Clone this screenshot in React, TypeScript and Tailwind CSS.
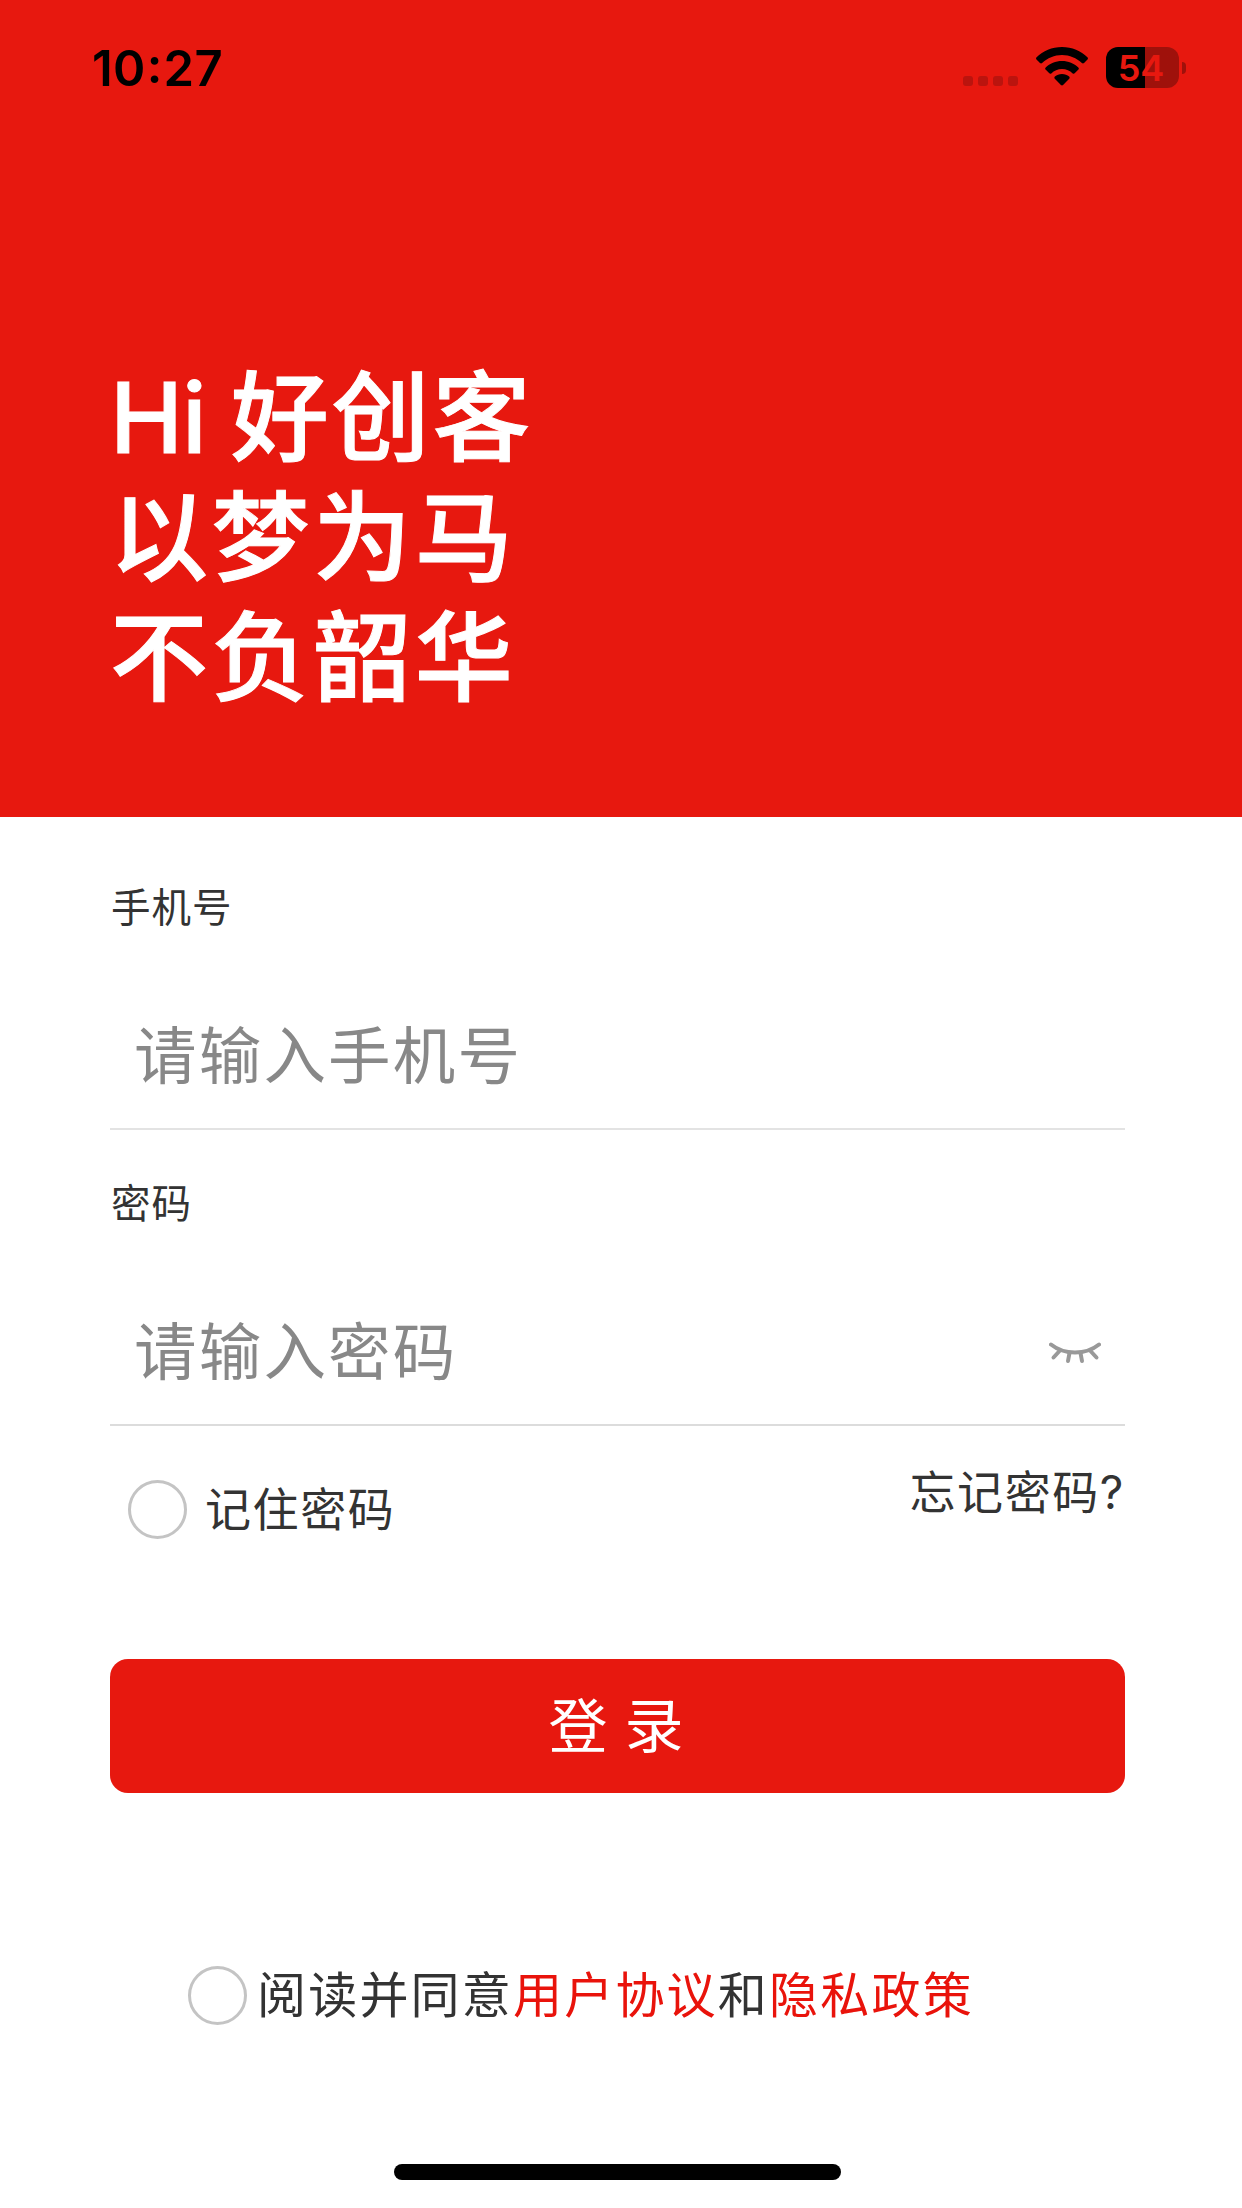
import { useState } from "react";
import { clsx } from "clsx";

const StatusBar = () => {
  return (
    <div className="flex h-[136px] items-start justify-between pl-[92px] pr-[56px] pt-[47px] text-black">
      <span className="font-['Inter',sans-serif] text-[49px] leading-[44px] font-semibold tracking-[0.3px]">
        10<span className="relative -top-[3px] mx-[1px]">:</span>27
      </span>
      <div className="-mt-px flex items-start">
        <div className="mt-[30px] mr-[17px] flex gap-[5px]">
          {[0, 1, 2, 3].map((dot) => (
            <span key={dot} className="size-[10px] rounded-[3px] bg-[#bb140e]" />
          ))}
        </div>
        <svg width="54" height="41" viewBox="0 0 54 41" className="mr-[17px]">
          <path d="M27 1C37 1 46 5 52.4 11.2c.7.7.7 1.6.1 2.2L49 17c-.6.6-1.5.6-2.1 0C41.600 12 34.600 9 27 9S12.400 12 7.100 17c-.6.600-1.500.600-2.100 0L1.500 13.400c-.6-.600-.6-1.500.1-2.200C8 5 17 1 27 1Z" />
          <path d="M27 15c6.400 0 12.200 2.500 16.300 6.400.7.700.7 1.600.1 2.200l-3.700 3.700c-.6.600-1.400.600-2 .1C34.900 24.700 31.200 23 27 23s-7.900 1.700-10.700 4.400c-.6.500-1.400.500-2-.1l-3.700-3.700c-.6-.600-.6-1.500.1-2.200C14.800 17.500 20.600 15 27 15Z" />
          <path d="M27 28c2.800 0 5.300 1 7.100 2.500.7.600.7 1.500.1 2.200l-6.100 6.400c-.6.600-1.600.600-2.200 0l-6.100-6.400c-.6-.7-.6-1.600.1-2.200C21.700 29 24.200 28 27 28Z" />
        </svg>
        <div className="mt-px flex items-center gap-[3px]">
          <div className="flex h-[41px] w-[73px] items-center justify-center rounded-[12px] bg-linear-to-r from-black from-[54%] to-[#9f110b] to-[54%] pr-[3px] font-['Inter',sans-serif] text-[36px] leading-[42px] font-semibold text-[#e7180f]">
            54
          </div>
          <span className="h-[12px] w-[4px] rounded-r-full bg-[#9f110b]" />
        </div>
      </div>
    </div>
  );
};

const ClosedEye = () => {
  return (
    <svg
      width="52"
      height="24"
      viewBox="0 0 52 24"
      fill="none"
      stroke="#999"
      strokeWidth="4"
      strokeLinecap="round"
    >
      <path d="M2 3.500Q12 11.500 26 11.500T50 3.500" />
      <path d="M10.500 10 4.500 16.500M20.500 12 19 20M31.500 12 33 20M41.500 10 47.500 16.500" />
    </svg>
  );
};

type RadioProps = { checked: boolean; onClick: () => void };

const Radio = ({ checked, onClick }: RadioProps) => (
  <button
    type="button"
    onClick={onClick}
    className={clsx(
      "size-[59px] shrink-0 rounded-full border-[3px]",
      checked ? "border-[#e7180f] bg-[#e7180f]" : "border-[#c4c4c4]"
    )}
  />
);

const inputClass =
  "h-[146px] min-w-0 flex-1 bg-transparent pt-[3px] text-[62.500px] tracking-[2.200px] text-[#333] placeholder:text-[#888] outline-none";

const App = () => {
  const [remember, setRemember] = useState(false);
  const [agree, setAgree] = useState(false);
  const [showPwd, setShowPwd] = useState(false);

  return (
    <div className="flex h-[2208px] w-[1242px] flex-col bg-white font-['Inter','Noto_Sans_CJK_SC',sans-serif] text-[#333]">
      <header className="h-[817px] bg-[#e7180f]">
        <StatusBar />
        <h1 className="pl-[110px] pt-[222px] text-[98px] leading-[120px] font-medium tracking-[3.600px] text-white [-webkit-text-stroke:1px_white]">
          <span className="tracking-[-1px]">Hi </span>
          <span className="tracking-[2.800px]">好创客</span>
          <br />
          以梦为马
          <br />
          不负韶华
        </h1>
      </header>

      <main className="flex flex-col pl-[110px] pr-[117px]">
        <label className="mt-[61px] h-[60px] pl-px text-[39.500px] leading-[61px] tracking-[1px]">
          手机号
        </label>
        <div className="mt-[42px] flex h-[150px] items-center border-b-2 border-[#e3e3e3] px-[24px]">
          <input className={inputClass} placeholder="请输入手机号" />
        </div>

        <label className="mt-[44px] h-[60px] pl-px text-[39.500px] leading-[61px] tracking-[1px]">
          密码
        </label>
        <div className="mt-[42px] flex h-[150px] items-center border-b-2 border-[#dcdcdc] px-[24px]">
          <input
            className={inputClass}
            type={showPwd ? "text" : "password"}
            placeholder="请输入密码"
          />
          <button
            type="button"
            className="pt-[5px]"
            onClick={() => setShowPwd(!showPwd)}
          >
            <ClosedEye />
          </button>
        </div>

        <div className="flex h-[233px] items-start justify-between pl-[18px] text-[46px] leading-[58px] tracking-[1.600px]">
          <div className="mt-[54px] flex items-start gap-[18px]">
            <Radio checked={remember} onClick={() => setRemember(!remember)} />
            <span>记住密码</span>
          </div>
          <a className="mt-[37px]">忘记密码?</a>
        </div>

        <button
          type="button"
          className="h-[134px] rounded-[18px] bg-[#e7180f] pt-[3px] pr-[3px] text-[59px] tracking-[0.200px] text-white"
        >
          登 录
        </button>

        <div className="mt-[173px] flex items-center gap-[10px] pl-[78px]">
          <Radio checked={agree} onClick={() => setAgree(!agree)} />
          <p className="text-[49px] leading-[59px] tracking-[2.200px]">
            阅读并同意<a className="text-[#e9130b]">用户协议</a>和
            <a className="text-[#e9130b]">隐私政策</a>
          </p>
        </div>
      </main>

      <div className="mx-auto mt-auto mb-[28px] h-[16px] w-[447px] shrink-0 translate-x-[-4px] rounded-full bg-black" />
    </div>
  );
};

export default App;
